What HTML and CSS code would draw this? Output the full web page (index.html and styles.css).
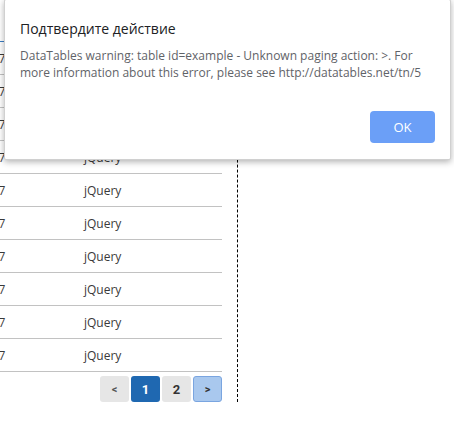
FILE: index.html
```html
<!DOCTYPE html>
<html lang="ru">
<head>
<meta charset="utf-8">
<title>DataTables</title>
<link rel="stylesheet" href="styles.css">
</head>
<body>
<div class="panel">
  <div class="table">
    <div class="row head"><span class="c1"></span><span class="c2">Library</span></div>
    <div class="row"><span class="c1">2017</span><span class="c2">jQuery</span></div>
    <div class="row"><span class="c1">2017</span><span class="c2">jQuery</span></div>
    <div class="row"><span class="c1">2017</span><span class="c2">jQuery</span></div>
    <div class="row"><span class="c1">2017</span><span class="c2">jQuery</span></div>
    <div class="row"><span class="c1">2017</span><span class="c2">jQuery</span></div>
    <div class="row"><span class="c1">2017</span><span class="c2">jQuery</span></div>
    <div class="row"><span class="c1">2017</span><span class="c2">jQuery</span></div>
    <div class="row"><span class="c1">2017</span><span class="c2">jQuery</span></div>
    <div class="row"><span class="c1">2017</span><span class="c2">jQuery</span></div>
    <div class="row"><span class="c1">2017</span><span class="c2">jQuery</span></div>
  </div>
  <div class="pager">
    <span class="pbtn prev">&lt;</span>
    <span class="pbtn current">1</span>
    <span class="pbtn">2</span>
    <span class="pbtn next">&gt;</span>
  </div>
</div>

<div class="dialog">
  <div class="d-title">Подтвердите действие</div>
  <div class="d-text">DataTables warning: table id=example - Unknown paging action: &gt;. For<br>more information about this error, please see http://datatables.net/tn/5</div>
  <div class="d-actions"><button class="ok">OK</button></div>
</div>
</body>
</html>
```

FILE: styles.css
```css
html, body {
  margin: 0;
  padding: 0;
  background: #fff;
  overflow: hidden;
}
body {
  width: 454px;
  height: 423px;
  position: relative;
  font-family: "Open Sans", "Noto Sans", sans-serif;
}
.panel {
  width: 237px;
  height: 393px;
  padding-top: 9px;
  border-right: 1px dashed #000;
}
.table {
  width: 222px;
}
.row {
  display: flex;
  align-items: center;
  height: 32px;
  border-bottom: 1px solid #c2c2c2;
  font-size: 12px;
  color: #3a3a3a;
}
.row.head {
  border-bottom-color: #3a7cc2;
  font-weight: bold;
}
.c1 {
  margin-left: -22px;
  width: 106px;
  flex: none;
}
.pager {
  display: flex;
  justify-content: flex-end;
  gap: 2px;
  width: 222px;
  margin-top: 4px;
}
.pbtn {
  box-sizing: border-box;
  width: 29px;
  height: 26px;
  display: flex;
  align-items: center;
  justify-content: center;
  border-radius: 3px;
  background: #e6e6e6;
  color: #333;
  font-family: Roboto, "Open Sans", sans-serif;
  font-weight: bold;
  font-size: 13px;
}
.pbtn.prev, .pbtn.next {
  font-size: 11px;
  color: #555;
}
.pbtn.current {
  background: #1f68b1;
  color: #fff;
}
.pbtn.next {
  background: #a9c8ee;
  border: 1px solid #7aa5e0;
  color: #333;
}
.dialog {
  position: absolute;
  left: 4px;
  top: -1px;
  width: 447px;
  height: 161px;
  box-sizing: border-box;
  background: #fff;
  border: 1px solid #d0d0d0;
  border-radius: 2px;
  box-shadow: 0 2px 6px rgba(0, 0, 0, 0.3);
  padding: 15px 15px 16px 15px;
  display: flex;
  flex-direction: column;
}
.d-title {
  font-size: 14px;
  color: #202124;
  line-height: 20px;
  margin-top: 4px;
}
.d-text {
  margin-top: 8px;
  font-size: 12px;
  line-height: 17px;
  color: #5f6368;
}
.d-actions {
  margin-top: auto;
  display: flex;
  justify-content: flex-end;
}
.ok {
  width: 65px;
  height: 32px;
  border: none;
  border-radius: 4px;
  background: #6b9ff7;
  color: #fff;
  font-family: "Open Sans", sans-serif;
  font-size: 13px;
  padding: 0;
}
```
